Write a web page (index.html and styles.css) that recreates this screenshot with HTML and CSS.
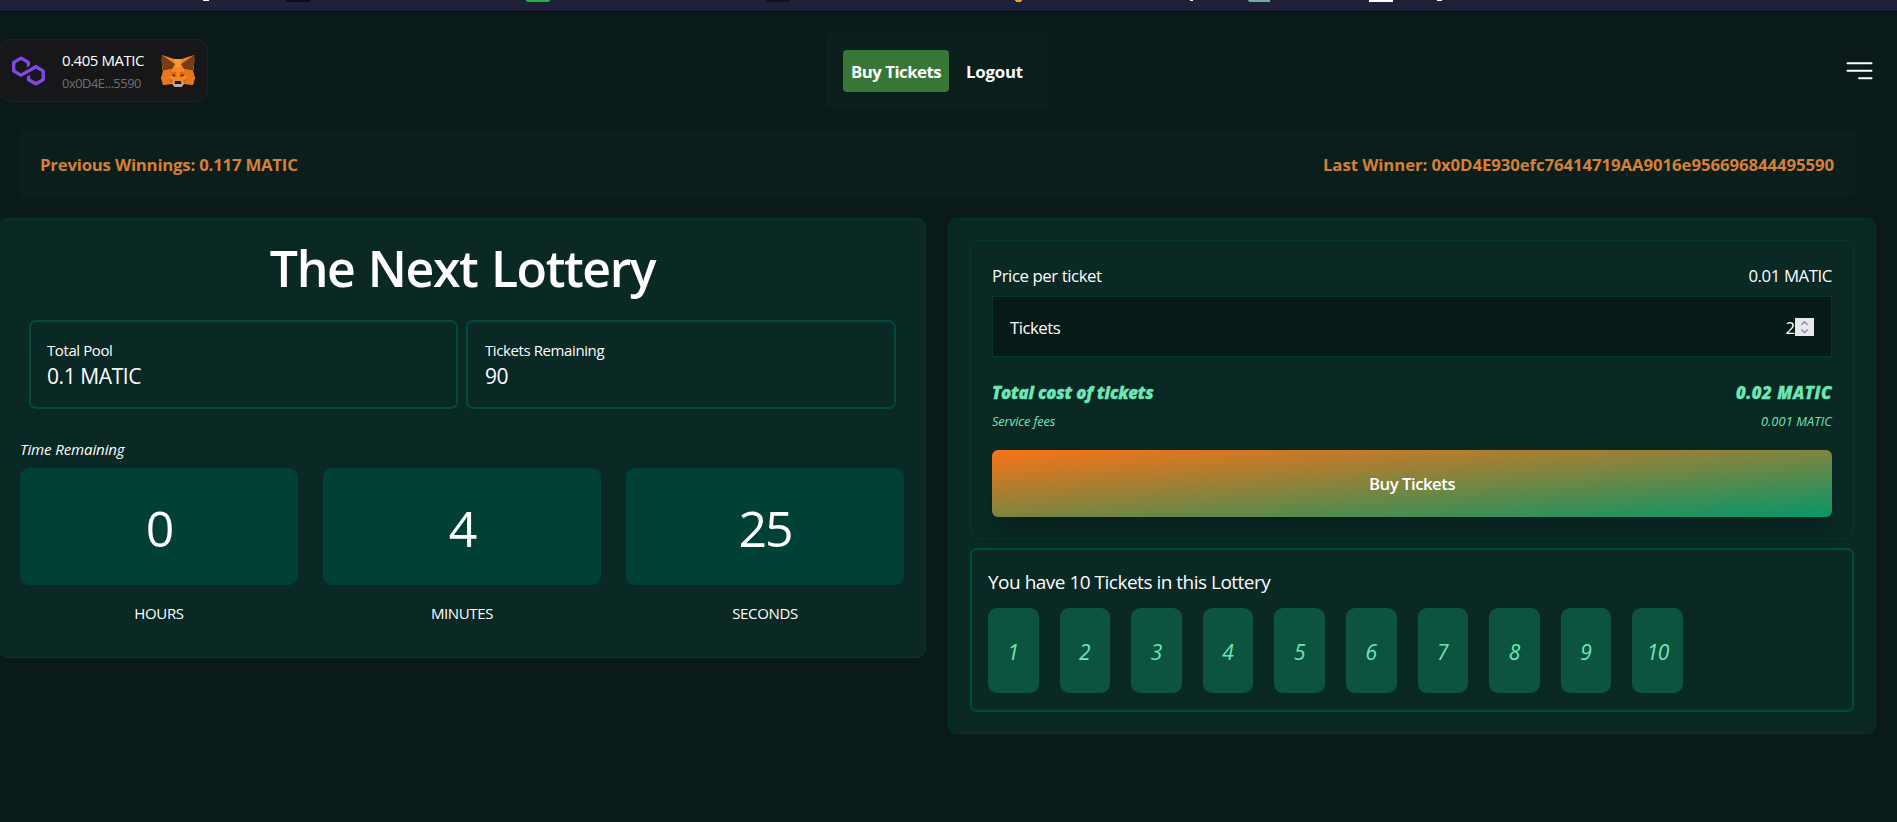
FILE: index.html
```html
<!DOCTYPE html>
<html lang="en">
<head>
<meta charset="utf-8">
<title>Lottery</title>
<link rel="stylesheet" href="styles.css">
</head>
<body>
<svg class="strip" width="1897" height="12" viewBox="0 0 1897 12" shape-rendering="crispEdges">
  <path fill="#1f213b" d="M0 0h1897v11H0z"/>
  <path fill="#060817" d="M0 11h1897v1H0z"/>
  <path fill="#fff" d="M203 0h6v1h-6zM1190 0h3v1h-3zM1369 0h24v2h-24zM1437 0h5v1h-5z"/>
  <path fill="#0d0a24" d="M286 0h24v2h-24z"/>
  <path fill="#1fb141" d="M526 0h24v1h-1v1h-22V1h-1z"/>
  <path fill="#0f141a" d="M766 0h24v2h-24z"/>
  <path fill="#f5a11c" d="M1015 0h7v1h-1v1h-5V1h-1z"/>
  <path fill="#75aa9f" d="M1248 0h22v2h-21V1h-1z"/>
</svg>

<header class="header">
  <div class="wallet">
    <svg class="chain" viewBox="0 0 38.4 33.5" width="33" height="30"><path fill="#8247e5" d="M29 10.2c-.7-.4-1.6-.4-2.4 0L21 13.5l-3.8 2.1-5.5 3.3c-.7.4-1.6.4-2.4 0L5 16.3c-.7-.4-1.2-1.2-1.2-2.1v-5c0-.8.4-1.6 1.2-2.1l4.3-2.5c.7-.4 1.6-.4 2.4 0L16 7.2c.7.4 1.2 1.2 1.2 2.1v3.3l3.8-2.2V7c0-.8-.4-1.6-1.2-2.1l-8-4.7c-.7-.4-1.6-.4-2.4 0L1.2 5C.4 5.4 0 6.2 0 7v9.4c0 .8.4 1.6 1.2 2.1l8.1 4.7c.7.4 1.6.4 2.4 0l5.5-3.2 3.8-2.2 5.500-3.2c.7-.4 1.6-.4 2.4 0l4.3 2.5c.7.4 1.2 1.2 1.2 2.1v5c0 .8-.4 1.6-1.2 2.1L29 28.8c-.7.4-1.6.4-2.4 0l-4.3-2.5c-.7-.4-1.2-1.2-1.2-2.1V21l-3.8 2.2v3.3c0 .8.4 1.6 1.2 2.1l8.1 4.7c.7.4 1.6.4 2.4 0l8.1-4.7c.7-.4 1.2-1.2 1.2-2.1V17c0-.8-.4-1.6-1.2-2.1L29 10.2z"/></svg>
    <div class="account">
      <div class="balance">0.405 MATIC</div>
      <div class="address">0x0D4E...5590</div>
    </div>
    <svg class="fox" viewBox="0 0 34 32" width="34" height="32">
      <path fill="#f6851b" d="M1 0l12 4h8L33 0v13l-1 3 2 7-2 7-9-1-3 3h-6l-3-3-9 1-2-7 2-7L1 13z"/>
      <path fill="#763d16" d="M1 0l13 9-3 5-9 1.500L1 10 0 6zM33 0L20 9l3 5 9 1.500L33 10l1-4z"/>
      <path fill="#e4761b" d="M3 16l7.500-2 1 4L8 23H0zM31 16l-7.500-2-1 4 3.500 5h8zM1 24l7-1 3 5-9 2zM33 24l-7-1-3 5 9 2z"/>
      <path fill="#f89a3a" d="M13 4h8l-2 8h-4z"/>
      <path fill="#cd6116" d="M10 18l5-1 .5 5-4.500-1zM24 18l-5-1-.5 5 4.500-1zM8 23l4 3-1 3zM26 23l-4 3 1 3z"/>
      <path fill="#24323d" d="M11.500 19.500l2.500.5v1.500l-2.500-.5zM22.500 19.500L20 20v1.500l2.500-.5z"/>
      <path fill="#c0ad9e" d="M11 28l2-2h8l2 2-2.500 4h-7z"/>
      <path fill="#161616" d="M14 26h6l.5 3h-7z"/>
    </svg>
  </div>
  <nav class="nav">
    <a class="nav-buy">Buy Tickets</a>
    <a class="nav-logout">Logout</a>
  </nav>
  <svg class="menu" width="27" height="20" viewBox="0 0 27 20"><path fill="none" stroke="#fff" stroke-width="2" stroke-linecap="round" d="M1.500 2.300h24M1.500 9.800h24M13 17.300h12.500"/></svg>
</header>

<section class="winnings">
  <p class="previous">Previous Winnings: 0.117 MATIC</p>
  <p class="winner">Last Winner: 0x0D4E930efc76414719AA9016e956696844495590</p>
</section>

<main class="main">
  <section class="panel">
    <h1 class="title">The Next Lottery</h1>
    <div class="stats">
      <div class="stat"><div class="stat-name">Total Pool</div><div class="stat-value">0.1 MATIC</div></div>
      <div class="stat"><div class="stat-name">Tickets Remaining</div><div class="stat-value">90</div></div>
    </div>
    <div class="time">Time Remaining</div>
    <div class="clock">
      <div><div class="digits">0</div><div class="unit">HOURS</div></div>
      <div><div class="digits">4</div><div class="unit">MINUTES</div></div>
      <div><div class="digits">25</div><div class="unit">SECONDS</div></div>
    </div>
  </section>

  <section class="panel order">
    <div class="card">
      <div class="row price"><span>Price per ticket</span><span>0.01 MATIC</span></div>
      <div class="field">
        <span class="field-name">Tickets</span>
        <span class="quantity">2<svg class="spinner" width="19" height="18" viewBox="0 0 19 18"><path fill="#e9e9ed" d="M0 0h19v18H0z"/><path fill="none" stroke="#8f8f9d" stroke-width="1.500" d="M6.300 7l3.200-3.200L12.700 7M6.300 11.500l3.200 3.200 3.200-3.200"/></svg></span>
      </div>
      <div class="row total"><span>Total cost of tickets</span><span class="sum">0.02 MATIC</span></div>
      <div class="row fees"><span>Service fees</span><span class="fee">0.001 MATIC</span></div>
      <button class="buy">Buy Tickets</button>
    </div>
    <div class="owned">
      <div class="owned-title">You have 10 Tickets in this Lottery</div>
      <div class="tickets">
        <span>1</span><span>2</span><span>3</span><span>4</span><span>5</span><span>6</span><span>7</span><span>8</span><span>9</span><span class="ten">10</span>
      </div>
    </div>
  </section>
</main>
</body>
</html>
```
FILE: styles.css
```css
* { box-sizing: border-box; }

body {
  margin: 0;
  height: 822px;
  overflow: hidden;
  background: #091a19;
  color: #fff;
  font-family: "Open Sans", "Noto Sans", sans-serif;
  font-size: 16.8px;
  white-space: nowrap;
}

p, h1 { margin: 0; }

.strip { display: block; }

.header {
  display: grid;
  grid-template-columns: 1fr auto 1fr;
  align-items: center;
  width: 1874px;
  height: 118px;
}

.wallet {
  display: flex;
  align-items: center;
  width: 209px;
  height: 63px;
  margin: -1px 0 0 -1px;
  padding-left: 12px;
  border: 1px solid #222225;
  border-radius: 12px;
  background: #17171a;
}

.account { width: 99px; margin-left: 17px; padding-top: 2px; }
.balance { font-size: 15px; line-height: 22px; letter-spacing: -0.45px; }
.address { margin-top: 1px; font-size: 12.8px; line-height: 22px; letter-spacing: -0.42px; color: #6f6f73; }

.nav {
  display: flex;
  align-items: center;
  width: 222px;
  height: 76px;
  padding-left: 17px;
  background: #0a1e1b;
  font-weight: 700;
  line-height: 42px;
}

.nav a { height: 42px; padding-top: 1px; }

.nav .nav-buy {
  width: 106px;
  padding-left: 8px;
  border-radius: 4px;
  background: #377636;
  letter-spacing: -0.5px;
}

.nav-logout { margin-left: 17px; letter-spacing: -0.2px; }

.menu { justify-self: end; margin-right: 1px; }

.winnings {
  display: flex;
  justify-content: space-between;
  width: 1836px;
  height: 67px;
  margin: 0 0 21px 19px;
  padding: 1px 21px 0 21px;
  background: #0a1e1b;
  color: #d58036;
  font-weight: 700;
  line-height: 67px;
}

.previous { letter-spacing: -0.22px; }
.winner { letter-spacing: -0.09px; }

.main {
  display: grid;
  grid-template-columns: 927px 928px;
  gap: 22px;
  align-items: start;
  margin-left: -1px;
}

.panel {
  height: 440px;
  padding: 19px 20px 0;
  border: 1px solid #05372d;
  border-radius: 9px;
  background: #0a2824;
}

.title {
  margin-bottom: 22px;
  font-size: 50px;
  font-weight: 600;
  line-height: 60px;
  letter-spacing: -1.45px;
  word-spacing: 2px;
  text-align: center;
}

.stats {
  display: grid;
  grid-template-columns: 429px 430px;
  gap: 8px;
  margin: 0 9px;
}

.stat {
  height: 89px;
  padding: 18px 16px 0;
  border: 2px solid #014a3c;
  border-radius: 7px;
}

.stat + .stat { padding-left: 17px; }

.stat-name { font-size: 15px; line-height: 20px; letter-spacing: -0.4px; }
.stat-value { margin-top: 2px; font-size: 21px; line-height: 28px; letter-spacing: -0.42px; }

.time {
  margin: 30px 0 9px;
  font-size: 15px;
  font-style: italic;
  line-height: 20px;
  letter-spacing: -0.1px;
}

.clock {
  display: grid;
  grid-template-columns: repeat(3, 278px);
  gap: 25px;
  text-align: center;
}

.digits {
  height: 117px;
  padding-top: 1px;
  border-radius: 9px;
  background: #004035;
  font-size: 50px;
  line-height: 119px;
  letter-spacing: -2px;
}

.unit { margin-top: 18px; font-size: 15px; line-height: 20px; letter-spacing: -0.36px; }

.order { height: 516px; padding: 21px; }

.card {
  height: 299px;
  padding: 21px;
  border: 1px solid #05372d;
  border-radius: 9px;
}

.row { display: flex; justify-content: space-between; line-height: 27px; }
.price { margin-bottom: 7px; letter-spacing: -0.42px; }

.field {
  display: flex;
  align-items: center;
  justify-content: space-between;
  height: 61px;
  padding: 0 17px;
  border: 1px solid #05372d;
  background: #081a18;
}

.field-name { padding-top: 2px; letter-spacing: -0.5px; }
.quantity { display: flex; align-items: center; line-height: 27px; padding-top: 1px; }

.total {
  margin-top: 22px;
  color: #6ee7b7;
  font-weight: 800;
  font-style: italic;
  letter-spacing: -0.18px;
  -webkit-text-stroke: 0.3px #6ee7b7;
}
.sum { letter-spacing: 0.5px; }
.fees { margin-top: 5px; color: #6ee7b7; font-size: 12.8px; font-style: italic; line-height: 20px; letter-spacing: -0.13px; }
.fee { letter-spacing: 0.1px; }

.buy {
  display: block;
  width: 100%;
  height: 67px;
  margin-top: 19px;
  padding: 0;
  border: 0;
  border-radius: 6px;
  background: linear-gradient(to bottom right, #f97316, #059669);
  box-shadow: 0 20px 25px -5px rgba(0, 0, 0, 0.1), 0 8px 10px -6px rgba(0, 0, 0, 0.1);
  color: #fff;
  font-family: inherit;
  font-size: 16.8px;
  font-weight: 600;
  letter-spacing: -0.5px;
}

.owned {
  height: 164px;
  margin-top: 9px;
  padding: 18px 16px 0;
  border: 2px solid #014a3c;
  border-radius: 7px;
  background: #0a2824;
}

.owned-title { margin-bottom: 12px; font-size: 19px; line-height: 28px; letter-spacing: -0.5px; }

.tickets { display: flex; gap: 21px; }

.tickets span {
  width: 50.6px;
  height: 85px;
  padding-top: 1px;
  border-radius: 9px;
  background: #0c5440;
  color: #6ee7b7;
  font-size: 21px;
  font-style: italic;
  line-height: 87px;
  text-align: center;
}

.tickets .ten { letter-spacing: -0.8px; }
```
